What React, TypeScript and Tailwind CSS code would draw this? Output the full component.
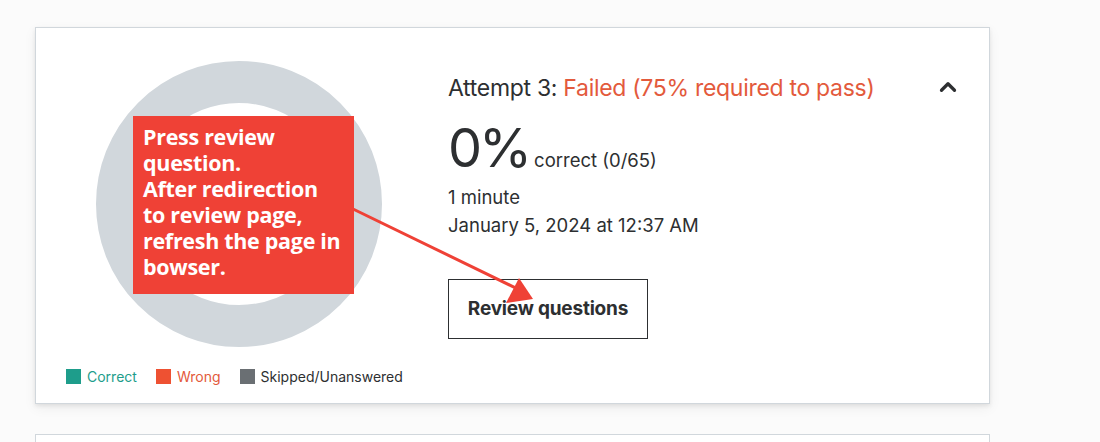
import { ChevronUp } from "lucide-react";

const legend = [
  { label: "Correct", box: "bg-[#1e9d8b]", text: "text-[#1e9d8b]" },
  { label: "Wrong", box: "bg-[#ee5132]", text: "text-[#e35a3c]" },
  { label: "Skipped/Unanswered", box: "bg-[#6a6f73]", text: "text-[#2d2f31]" },
];

function Donut() {
  return (
    <svg width="290" height="290" viewBox="0 0 290 290">
      <circle cx="145" cy="145" r="122" fill="none" stroke="#d1d7dc" strokeWidth="42" />
    </svg>
  );
}

export default function App() {
  return (
    <div className="w-[1100px] h-[442px] overflow-hidden bg-[#fbfbfb] pt-[27px] pl-[35px]" style={{ fontFamily: "Inter, 'Liberation Sans', sans-serif" }}>
      <div className="relative w-[955px] h-[377px] bg-white border border-[#d1d7dc] shadow-[0_2px_4px_rgba(0,0,0,0.08),0_4px_12px_rgba(0,0,0,0.06)] flex">
        <div className="w-[400px] flex flex-col">
          <div className="pl-[58px] pt-[31px] h-[338px]">
            <Donut />
          </div>
          <div className="flex items-center gap-[19px] pl-[30px] text-[14px]">
            {legend.map((l) => (
              <div key={l.label} className="flex items-center gap-[6px]">
                <span className={`w-[15px] h-[15px] ${l.box}`} />
                <span className={l.text}>{l.label}</span>
              </div>
            ))}
          </div>
        </div>

        <div className="flex-1 pl-[12px] pt-[44px] text-[#2d2f31]">
          <div className="flex items-center justify-between pr-[28px] h-[32px]">
            <div className="text-[23px] tracking-[-0.3px]">
              Attempt 3: <span className="text-[#e35a3c]">Failed (75% required to pass)</span>
            </div>
            <ChevronUp size={26} strokeWidth={3} className="text-[#2d2f31] mt-[-2px]" />
          </div>
          <div className="flex items-baseline mt-[17px] h-[52px]">
            <span className="text-[54px] leading-none tracking-[-3px]">0%</span>
            <span className="text-[18.5px] ml-[5px]">correct (0/65)</span>
          </div>
          <div className="text-[18.5px] leading-[28px] mt-[10px]">1 minute</div>
          <div className="text-[18.5px] leading-[28px]">January 5, 2024 at 12:37 AM</div>
          <button className="mt-[40px] w-[200px] h-[60px] border border-[#2d2f31] font-bold text-[19px] tracking-[-0.2px] text-[#2d2f31]">
            Review questions
          </button>
        </div>

        <div
          className="absolute left-[97px] top-[88px] w-[221px] h-[178px] bg-[#ef4136] text-white font-bold text-[21.5px] leading-[26px] pl-[10px] pt-[8px] tracking-[-0.3px]"
          style={{ fontFamily: "'Open Sans', 'Noto Sans', sans-serif" }}
        >
          Press review
          <br />
          question.
          <br />
          After redirection
          <br />
          to review page,
          <br />
          refresh the page in
          <br />
          bowser.
        </div>

        <svg className="absolute left-0 top-0 pointer-events-none" width="955" height="377">
          <line x1="317" y1="181" x2="490" y2="265" stroke="#ef4136" strokeWidth="3" />
          <polygon points="483,250 497,271 470,275" fill="#ef4136" />
        </svg>
      </div>
      <div className="mt-[30px] w-[955px] h-[40px] bg-white border border-[#d1d7dc]" />
    </div>
  );
}
